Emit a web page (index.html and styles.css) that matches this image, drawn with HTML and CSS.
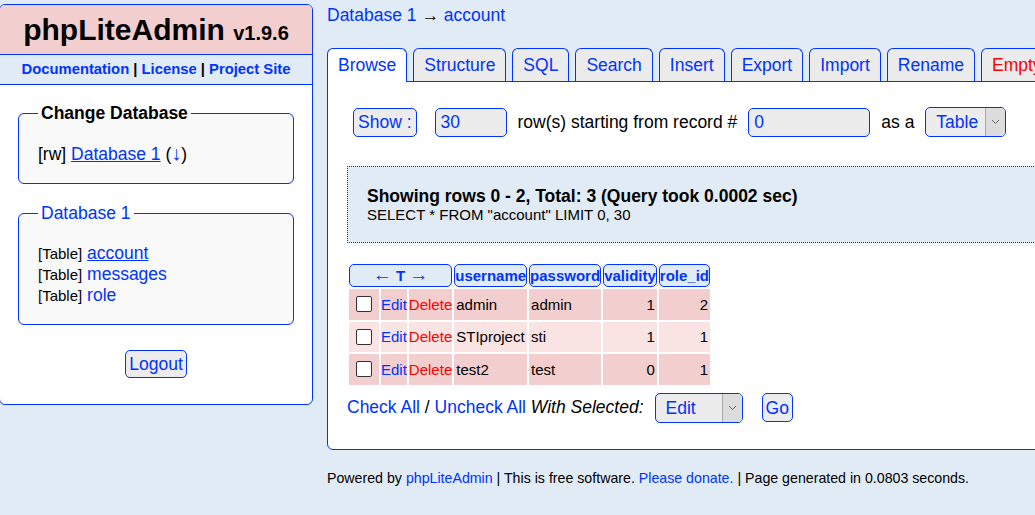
FILE: index.html
```html
<!DOCTYPE html>
<html lang="en">
<head>
<meta charset="utf-8">
<title>phpLiteAdmin</title>
<link rel="stylesheet" href="styles.css">
</head>
<body>
<div class="page">
  <nav class="leftnav">
    <h1 class="brand">phpLiteAdmin <span class="version">v1.9.6</span></h1>
    <div class="headerlinks"><a href="#">Documentation</a> | <a href="#">License</a> | <a href="#">Project Site</a></div>
    <fieldset class="box box-db">
      <legend class="legend-bold">Change Database</legend>
      <div class="dbline">[rw] <a class="u" href="#">Database 1</a> (<a class="down" href="#">↓</a>)</div>
    </fieldset>
    <fieldset class="box box-tables">
      <legend><a href="#">Database 1</a></legend>
      <ul class="tables">
        <li><span class="tag">[Table]</span> <a class="u" href="#">account</a></li>
        <li><span class="tag">[Table]</span> <a href="#">messages</a></li>
        <li><span class="tag">[Table]</span> <a href="#">role</a></li>
      </ul>
    </fieldset>
    <div class="logout-wrap"><button class="btn logout-btn" type="button">Logout</button></div>
  </nav>

  <main class="content">
    <div class="crumb"><a href="#">Database 1</a> <span class="arrow">→</span> <a href="#">account</a></div>
    <div class="tabs">
      <a class="tab active" href="#">Browse</a>
      <a class="tab" href="#">Structure</a>
      <a class="tab" href="#">SQL</a>
      <a class="tab" href="#">Search</a>
      <a class="tab" href="#">Insert</a>
      <a class="tab" href="#">Export</a>
      <a class="tab" href="#">Import</a>
      <a class="tab" href="#">Rename</a>
      <a class="tab danger" href="#">Empty</a>
      <a class="tab danger" href="#">Drop</a>
    </div>
    <div class="main">
      <form class="showrow">
        <button class="btn show-btn" type="button">Show :</button>
        <input class="field field-num" type="text" value="30">
        <span>row(s) starting from record #</span>
        <input class="field field-start" type="text" value="0">
        <span>as a</span>
        <span class="select select-view">
          <select class="select-native"><option>Table</option></select>
          <span class="select-arrow"><svg width="9" height="6" viewBox="0 0 9 6"><path d="M1 1 L4.5 4.5 L8 1" fill="none" stroke="#666" stroke-width="1"/></svg></span>
        </span>
      </form>

      <div class="message">
        <div class="msg-title">Showing rows 0 - 2, Total: 3 (Query took 0.0002 sec)</div>
        <div class="msg-sql">SELECT * FROM "account" LIMIT 0, 30</div>
      </div>

      <table class="data">
        <thead>
          <tr>
            <th class="th" colspan="3"><a href="#"><span class="harrow">←</span> T <span class="harrow">→</span></a></th>
            <th class="th"><a href="#">username</a></th>
            <th class="th"><a href="#">password</a></th>
            <th class="th"><a href="#">validity</a></th>
            <th class="th"><a href="#">role_id</a></th>
          </tr>
        </thead>
        <tbody>
          <tr class="row-a">
            <td class="cb"><input class="check" type="checkbox"></td>
            <td><a href="#">Edit</a></td>
            <td><a class="del" href="#">Delete</a></td>
            <td class="txt">admin</td>
            <td class="txt">admin</td>
            <td class="num">1</td>
            <td class="num">2</td>
          </tr>
          <tr class="row-b">
            <td class="cb"><input class="check" type="checkbox"></td>
            <td><a href="#">Edit</a></td>
            <td><a class="del" href="#">Delete</a></td>
            <td class="txt">STIproject</td>
            <td class="txt">sti</td>
            <td class="num">1</td>
            <td class="num">1</td>
          </tr>
          <tr class="row-a">
            <td class="cb"><input class="check" type="checkbox"></td>
            <td><a href="#">Edit</a></td>
            <td><a class="del" href="#">Delete</a></td>
            <td class="txt">test2</td>
            <td class="txt">test</td>
            <td class="num">0</td>
            <td class="num">1</td>
          </tr>
        </tbody>
      </table>

      <div class="actions">
        <a href="#">Check All</a>&nbsp;/&nbsp;<a href="#">Uncheck All</a>&nbsp;<i>With Selected:</i>
        <span class="select select-action">
          <select class="select-native"><option>Edit</option></select>
          <span class="select-arrow"><svg width="9" height="6" viewBox="0 0 9 6"><path d="M1 1 L4.5 4.5 L8 1" fill="none" stroke="#666" stroke-width="1"/></svg></span>
        </span>
        <button class="btn go-btn" type="button">Go</button>
      </div>
    </div>
    <div class="footer">Powered by <a href="#">phpLiteAdmin</a> | This is free software. <a href="#">Please donate.</a> | Page generated in 0.0803 seconds.</div>
  </main>
</div>
</body>
</html>
```
FILE: styles.css
```css
* { box-sizing: border-box; }
html, body { overflow: hidden; }
body {
  margin: 0;
  background: #e0ebf6;
  font-family: "Liberation Sans", Arial, sans-serif;
  font-size: 17.5px;
  color: #000;
}
a { color: #03f; text-decoration: none; }
a.u { text-decoration: underline; }

.page {
  display: flex;
  align-items: flex-start;
  width: 1150px;
}

/* ---------- left navigation ---------- */
.leftnav {
  flex: 0 0 314px;
  margin: 4px 0 0 -1px;
  background: #fff;
  border: 1px solid #03f;
  border-radius: 6px;
  padding-bottom: 26px;
  display: flex;
  flex-direction: column;
}
.brand {
  margin: 0;
  padding: 7px 6px;
  font-size: 30px;
  line-height: 35px;
  height: 49px;
  text-align: center;
  background: #f3cece;
  border-radius: 5px 5px 0 0;
  font-weight: bold;
}
.version { font-size: 20px; line-height: 1; }
.headerlinks {
  text-align: center;
  padding: 6px 15px;
  border-top: 1px solid #03f;
  border-bottom: 1px solid #03f;
  background: #e0ebf6;
  font-size: 14.8px;
  font-weight: bold;
  line-height: 17px;
}
.box {
  margin: 18px 18px 0;
  border: 1px solid #03f;
  border-radius: 6px;
  background: #f9f9f9;
  min-width: 0;
}
.box-db { padding: 20px 19px 19px; }
.box-tables { margin-top: 19px; padding: 20px 19px 18px; }
.box legend {
  padding: 0 3px;
  font-size: 17.5px;
  line-height: 20px;
}
.legend-bold { font-weight: bold; }
.dbline { line-height: 21px; height: 21px; }
.down { font-size: 20px; }
.tables {
  list-style: none;
  margin: 0;
  padding: 0;
}
.tables li { line-height: 21px; }
.tag { font-size: 15px; }
.logout-wrap {
  display: flex;
  justify-content: center;
  margin-top: 25px;
}
.btn {
  font-family: inherit;
  font-size: 17.5px;
  line-height: 20px;
  color: #03f;
  background: #ececec;
  border: 1px solid #03f;
  border-radius: 5px;
  padding: 3px 3px;
  margin: 0;
}
.logout-btn { height: 28px; }

/* ---------- content ---------- */
.content {
  flex: 1;
  margin-left: 14px;
  min-width: 0;
}
.crumb {
  padding-top: 5px;
  line-height: 20px;
}
.crumb .arrow { color: #000; }
.tabs {
  display: flex;
  align-items: flex-end;
  gap: 6px;
  margin-top: 23px;
  white-space: nowrap;
}
.tab {
  flex: none;
  height: 33px;
  line-height: 31px;
  padding: 1px 10px 0;
  border: 1px solid #03f;
  border-bottom: none;
  border-radius: 6px 6px 0 0;
  background: #ebebeb;
}
.tab.active {
  background: #fff;
  height: 34px;
  margin-bottom: -1px;
  position: relative;
  z-index: 1;
}
.tab.danger { color: #f00; }

.main {
  background: #fff;
  border: 1px solid #03f;
  border-radius: 0 0 0 6px;
  padding: 19px 19px 26px;
}
.showrow {
  display: flex;
  align-items: center;
  gap: 11px;
  margin: 6px 0 0 6px;
}
.show-btn { padding: 3px 4px; margin-right: 7px; height: 29px; }
.field {
  font-family: inherit;
  font-size: 17.5px;
  line-height: 20px;
  color: #03f;
  background: #ececec;
  border: 1px solid #03f;
  border-radius: 5px;
  padding: 3.5px 5px;
  margin: 0;
  height: 29px;
}
.field-num { width: 72px; }
.field-start { width: 122px; }

.select {
  display: inline-flex;
  align-items: stretch;
  border: 1px solid #03f;
  border-radius: 5px;
  background: #ececec;
  overflow: hidden;
  height: 30px;
}
.select-native {
  appearance: none;
  -webkit-appearance: none;
  border: none;
  background: transparent;
  font-family: inherit;
  font-size: 17.5px;
  color: #03f;
  padding: 0 0 0 10px;
  margin: 0;
  flex: 1;
  min-width: 0;
  outline: none;
}
.select-arrow {
  width: 20px;
  flex: none;
  display: flex;
  align-items: center;
  justify-content: center;
  background: #dcdcdc;
  border-left: 1px solid #a8a8a8;
}
.select-view { width: 81px; }
.select-action { width: 88px; margin-left: 11px; }

.message {
  margin-top: 29px;
  border: 1px dotted #03f;
  background: #e0ebf6;
  padding: 19px 19px 19px;
}
.msg-title {
  font-weight: bold;
  line-height: 20px;
}
.msg-sql {
  font-size: 15px;
  line-height: 17px;
}

.data {
  margin-top: 19px;
  border-spacing: 2px;
  font-size: 15px;
}
.th {
  border: 1px solid #03f;
  border-radius: 5px;
  background: #e0ebf6;
  font-weight: bold;
  padding: 0;
  height: 22px;
  line-height: 20px;
  text-align: center;
}
.harrow { font-weight: normal; font-size: 19px; line-height: 20px; }
.data td {
  height: 30.5px;
  padding: 0;
  line-height: 17px;
}
.row-a td { background: #f3cece; }
.row-b td { background: #f9e3e3; }
.data td.cb {
  width: 30px;
  text-align: center;
}
.data td.txt { padding: 0 2px; }
.data td.num { padding: 0 2px; text-align: right; }
.del { color: #f00; }
.check {
  appearance: none;
  -webkit-appearance: none;
  width: 16px;
  height: 16px;
  display: block;
  margin: 0 auto;
  border: 1px solid #333;
  border-radius: 2px;
  background: #fff;
}

.actions {
  display: flex;
  align-items: center;
  margin-top: 6px;
  white-space: nowrap;
}
.actions i { color: #000; }
.go-btn { margin-left: 19px; padding: 3px 3px; height: 29px; }

.footer {
  margin-top: 20px;
  font-size: 14.2px;
  line-height: 17px;
}
```
